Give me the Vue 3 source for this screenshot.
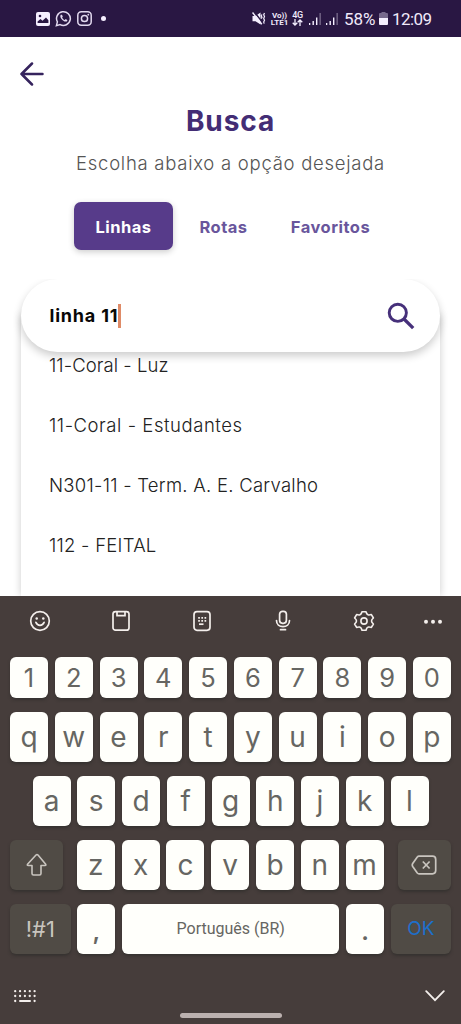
<script setup>
const tabs = [
  { label: 'Linhas', cls: 'linhas' },
  { label: 'Rotas', cls: 'rotas' },
  { label: 'Favoritos', cls: 'favoritos' }
]
const results = [
  { text: '11-Coral - Luz', cls: 'luz' },
  { text: '11-Coral - Estudantes', cls: 'estudantes' },
  { text: 'N301-11 - Term. A. E. Carvalho', cls: 'carvalho' },
  { text: '112 - FEITAL', cls: 'feital' }
]
const digits = [...'1234567890']
const top = [...'qwertyuiop']
const home = [...'asdfghjkl']
const bottom = [...'zxcvbnm']
const dots = [0, 1, 2, 3, 4]
</script>

<template>
  <div class="phone">
    <header class="status">
      <div class="notifications">
        <svg width="14" height="14" viewBox="0 0 14 14"><rect width="14" height="14" rx="2" fill="#f5efff" /><circle cx="4" cy="4" r="1.3" fill="#291743" /><path d="M1.6 11V9.5L4.5 7l2 1.7L10 5.6l2.4 2.6V11z" fill="#291743" /></svg>
        <svg class="wa" width="17" height="17" viewBox="0 0 17 17" fill="none" stroke="#e2d9ef" stroke-width="1.5"><path d="M1.4 15.6l1-3.7a6.9 6.9 0 1 1 2.7 2.7z" /><path d="M5.700 5c-.8 1-.3 2.600.8 4s3 2.800 4.500 2.600 1.500-1.500 1.200-1.700l-1.500-.8-.9 1c-1.100-.3-2.300-1.400-2.700-2.500l.7-.8-.7-1.700c-.5-.4-1-.5-1.400-.1z" fill="#e2d9ef" stroke="none" /></svg>
        <svg width="15" height="15" viewBox="0 0 15 15" fill="none" stroke="#e2d9ef" stroke-width="1.500"><rect x=".8" y=".8" width="13.400" height="13.400" rx="3.500" /><circle cx="7.500" cy="7.500" r="3.100" /><circle cx="11.300" cy="3.700" r=".9" fill="#e2d9ef" stroke="none" /></svg>
        <span class="bullet"></span>
      </div>
      <div class="indicators">
        <svg class="mute" width="14" height="13" viewBox="0 0 14 13"><path d="M.5 4h3L8.500.4v12.200L3.500 9.200h-3z" fill="#f5efff" /><path d="M2-.5l9 11.500" stroke="#291743" stroke-width="1.400" /><path d="M.5.5l9.300 11.700" stroke="#f5efff" stroke-width="1.500" /><path d="M10 2.500l-.8 1.300.8 1.400-.8 1.400M12.500 1l-.8 1.800.8 1.800-.8 1.800.8 1.900-.8 1.800.5 1.500" fill="none" stroke="#f5efff" stroke-width="1.200" /></svg>
        <div class="volte"><span>Vo))</span><span>LTE1</span></div>
        <div class="net"><span>4G</span><svg width="11" height="7" viewBox="0 0 11 7" fill="none" stroke="#f5efff" stroke-width="1.300"><path d="M3 0v5.800M.7 3.700L3 6l2.300-2.300M8 7V1M5.700 3.300L8 1l2.300 2.300" /></svg></div>
        <svg class="sig1" width="12" height="12" viewBox="0 0 12 12" fill="#f5efff"><path d="M0 10h1.300v2H0zM3.500 8h1.400v4H3.500zM7 4.500h1.400V12H7z" /><path d="M10.500 0h1.300v12h-1.300z" opacity=".4" /></svg>
        <svg class="sig2" width="12" height="12" viewBox="0 0 12 12" fill="#f5efff"><path d="M0 10h1.300v2H0zM3.500 8h1.400v4H3.500zM7 4.500h1.400V12H7z" /><path d="M10.500 0h1.300v12h-1.300z" opacity=".4" /></svg>
        <span class="percent">58%</span>
        <svg class="battery" width="9" height="13" viewBox="0 0 9 13"><path d="M2.500 0h4v1H8q1 0 1 1v4H0V2q0-1 1-1h1.500z" fill="#77698d" /><path d="M0 6h9v6q0 1-1 1H1q-1 0-1-1z" fill="#f5efff" /></svg>
        <span class="clock">12:09</span>
      </div>
    </header>

    <main class="page">
      <svg class="back" width="24" height="24" viewBox="0 0 24 24" fill="none" stroke="#35235d" stroke-width="2.500" stroke-linecap="round" stroke-linejoin="round"><path d="M22.500 12H1.500M12 1.500L1.500 12 12 22.500" /></svg>
      <h1><span>Busca</span></h1>
      <p class="subtitle"><span>Escolha abaixo a opção desejada</span></p>
      <nav class="tabs">
        <button v-for="(t, i) in tabs" :key="t.label" :class="[t.cls, { active: i === 0 }]">{{ t.label }}</button>
      </nav>
      <section class="finder">
        <div class="search">
          <span class="query">linha 11</span><span class="caret"></span>
          <svg class="lens" width="28" height="28" viewBox="0 0 28 28" fill="none" stroke="#46307a" stroke-width="2.900"><circle cx="10.800" cy="10.800" r="8.600" /><path d="M17 17l9.200 9.200" stroke-width="3.300" /></svg>
        </div>
        <ul><li v-for="r in results" :key="r.text"><span :class="r.cls">{{ r.text }}</span></li></ul>
      </section>
    </main>

    <section class="keyboard">
      <div class="tools">
        <svg width="22" height="22" viewBox="0 0 22 22" fill="none" stroke="#f4efec" stroke-width="1.700" stroke-linecap="round"><circle cx="11" cy="11" r="9.300" /><path d="M6.900 12.400q1.300 2.900 4.100 2.900t4.100-2.900" /><circle cx="7.700" cy="8.600" r="1.250" fill="#f4efec" stroke="none" /><circle cx="14.300" cy="8.600" r="1.250" fill="#f4efec" stroke="none" /></svg>
        <svg width="22" height="22" viewBox="0 0 22 22" fill="none" stroke="#f4efec" stroke-width="1.700"><rect x="3" y="1.600" width="16" height="18.600" rx="2.500" /><path d="M7 2v3.700h8V2" /></svg>
        <svg width="22" height="22" viewBox="0 0 22 22" fill="none" stroke="#f4efec" stroke-width="1.700"><rect x="3" y="1.700" width="16" height="18.600" rx="3" /><path d="M7.200 7.900h8M7.200 10.900h8" stroke-width="1.700" stroke-dasharray="1.700 1.450" /><path d="M8 14.200h4.500" /></svg>
        <svg width="22" height="22" viewBox="0 0 22 22" fill="none" stroke="#f4efec" stroke-width="1.700" stroke-linecap="round"><rect x="7.600" y="1.300" width="6.800" height="12" rx="3" /><path d="M4.500 10.500c0 4 3 6.200 6.500 6.200s6.500-2.200 6.500-6.200M8.500 19.700h5" /></svg>
        <svg width="22" height="22" viewBox="0 0 22 22" fill="none" stroke="#f4efec" stroke-width="1.600" stroke-linejoin="round"><path d="M9 1.700h4q.6 2.900 2.500 3.300 1 .2 2.900-.4l2 3.400q-1.900 1.600-1.900 3t1.900 3l-2 3.400q-1.900-.6-2.900-.4-1.900.4-2.500 3.300H9Q8.400 17.400 6.500 17q-1-.2-2.900.4l-2-3.400q1.900-1.600 1.900-3T1.600 8l2-3.400q1.900.6 2.900.4Q8.400 4.600 9 1.700z" /><circle cx="11" cy="11" r="3.100" /></svg>
        <svg width="22" height="22" viewBox="0 0 22 22" fill="#f4efec"><circle cx="4" cy="11.800" r="2" /><circle cx="11" cy="11.800" r="2" /><circle cx="18" cy="11.800" r="2" /></svg>
      </div>
      <div class="row numbers"><kbd v-for="k in digits" :key="k">{{ k }}</kbd></div>
      <div class="row"><kbd v-for="k in top" :key="k">{{ k }}</kbd></div>
      <div class="row home"><kbd v-for="k in home" :key="k">{{ k }}</kbd></div>
      <div class="row letters">
        <kbd class="dark shift"><svg width="22" height="24" viewBox="0 0 22 24" fill="none" stroke="#c9c5bf" stroke-width="1.600" stroke-linejoin="round"><path d="M10 2L1.500 11.300q-.7 1.200.7 1.200H6v8q0 1.500 1.500 1.500h6q1.500 0 1.500-1.500v-8h4q1.400 0 .7-1.200L12 2q-1-.9-2 0z" /></svg></kbd>
        <kbd v-for="k in bottom" :key="k">{{ k }}</kbd>
        <kbd class="dark erase"><svg width="26" height="20" viewBox="0 0 26 20" fill="none" stroke="#c9c5bf" stroke-width="1.700" stroke-linejoin="round"><path d="M8 1.200h13.500q3.200 0 3.200 3.200v11.200q0 3.200-3.200 3.200H8q-1 0-1.700-.8L1.700 11.500q-.9-1.500 0-3L6.300 2Q7 1.200 8 1.200zM11.800 6.500l6.800 7M18.600 6.500l-6.800 7" /></svg></kbd>
      </div>
      <div class="row last">
        <kbd class="dark symbols">!#1</kbd><kbd class="punct">,</kbd><kbd class="space">Português (BR)</kbd><kbd class="punct">.</kbd><kbd class="dark ok">OK</kbd>
      </div>
      <footer>
        <svg width="22" height="13" viewBox="0 0 22 13" fill="#f4efec"><template v-for="d in dots" :key="d"><circle :cx="1.200 + d * 4.850" cy="1.200" r="1.150" /><circle :cx="1.200 + d * 4.850" cy="6" r="1.150" /></template><circle cx="1.200" cy="11" r="1.150" /><circle cx="20.600" cy="11" r="1.150" /><rect x="5" y="9.900" width="12" height="2.200" rx="1" /></svg>
        <span class="handle"></span>
        <svg width="20" height="12" viewBox="0 0 20 12" fill="none" stroke="#f4efec" stroke-width="1.800" stroke-linecap="round"><path d="M1.200 1.200L10 10.200l8.800-9" /></svg>
      </footer>
    </section>
  </div>
</template>

<style>
body { margin: 0; }
</style>

<style scoped>
* { box-sizing: border-box; }
svg { display: block; flex: none; }
.phone { width: 461px; height: 1024px; overflow: hidden; background: #fff; display: flex; flex-direction: column; font-family: Inter, "Liberation Sans", sans-serif; }
.status { height: 37px; flex: none; background: #291743; display: flex; justify-content: space-between; padding: 0 30px 0 36px; color: #f0e9fa; font-family: Roboto, sans-serif; }
.notifications, .indicators { display: flex; align-items: center; }
.wa { margin: 0 5px 0 5px; }
.bullet { width: 5px; height: 5px; border-radius: 50%; background: #f5efff; margin-left: 9px; }
.volte, .net { display: flex; flex-direction: column; align-items: center; font-size: 8px; line-height: 7px; font-weight: 700; white-space: nowrap; }
.volte { width: 17px; margin-left: 5px; }
.net { width: 11px; margin-left: 4px; font-size: 9px; letter-spacing: -.3px; font-weight: 500; }
.sig1 { margin-left: 6px; }
.sig2 { margin-left: 5px; }
.percent { width: 32px; margin-left: 6px; font-size: 17px; letter-spacing: -.1px; }
.battery { margin-left: 3px; }
.clock { width: 39px; margin-left: 4px; font-size: 17px; letter-spacing: -.6px; white-space: nowrap; }
.page { height: 559px; flex: none; overflow: hidden; }
.back { margin: 25px 0 0 20px; }
h1 { margin: 18px 0 0; height: 34px; line-height: 34px; text-align: center; font-size: 28px; font-weight: 700; color: #432d75; letter-spacing: .9px; }
.subtitle { margin: 12px 0 0; height: 26px; line-height: 26px; text-align: center; color: #555; font-size: 18.500px; font-weight: 350; letter-spacing: .73px; white-space: nowrap; }
.tabs { display: flex; padding-left: 74px; margin-top: 26px; }
.tabs button { border: 0; padding: 2px 0 0; height: 48px; background: none; font: 700 16.500px/46px Inter, sans-serif; letter-spacing: .5px; color: #69569c; border-radius: 7px; text-align: center; white-space: nowrap; }
.tabs .linhas { width: 99px; }
.tabs .rotas { width: 101px; }
.tabs .favoritos { width: 113px; }
.tabs .active { background: #573b8a; color: #fff; box-shadow: 0 2px 6px #0003; }
.finder { margin-top: 12px; height: 334px; overflow: hidden; padding: 17px 21px 0; display: flex; flex-direction: column; clip-path: inset(17px 0 0); }
.search { height: 73px; flex: none; border-radius: 37px; background: #fff; box-shadow: 0 4px 8px #0003; display: flex; align-items: center; padding: 0 25px 0 28.500px; position: relative; z-index: 1; }
.query { font-size: 18px; font-weight: 700; letter-spacing: .8px; color: #080808; white-space: nowrap; }
.caret { width: 3px; height: 24px; background: #df8b67; }
.lens { margin-left: auto; }
ul { list-style: none; margin: -37px 0 0; padding: 20px 28px 0; height: 281px; flex: none; background: #fff; box-shadow: 0 0 8px #0003; }
li { height: 60px; line-height: 60px; margin: 0; font-size: 18.500px; font-weight: 350; color: #222; white-space: nowrap; }
.luz { letter-spacing: .07px; }
.estudantes { letter-spacing: .55px; }
.carvalho { letter-spacing: .26px; }
.feital { letter-spacing: .25px; }
.keyboard { height: 428px; background: #463d3b; flex: none; color: #666662; }
.tools { height: 61px; display: flex; justify-content: space-between; padding: 14px 17px 0 29px; }
.tools svg:last-child { margin-left: -12px; }
.row { display: grid; grid-template-columns: repeat(10, 38px); justify-content: space-between; padding: 0 10px; height: 50px; margin-bottom: 14px; }
.row.numbers { height: 41px; }
.row.home { grid-template-columns: repeat(9, 38px); padding: 0 32.500px; }
.row.letters { grid-template-columns: 60px repeat(7, 38px) 60px; justify-content: start; column-gap: 6.800px; }
.letters .shift { width: 53px; }
.letters .erase { width: 53px; margin-left: 7.500px; }
.row.last { grid-template-columns: 60.500px 38px 217px 38px 60px; }
kbd { display: flex; align-items: center; justify-content: center; background: #fffffb; border-radius: 6px; box-shadow: 0 2px 3px #32302dcc; font-family: Inter, sans-serif; font-size: 28px; line-height: 32px; font-weight: 400; padding-bottom: 0; }
.numbers kbd { font-size: 25.500px; padding-top: 1px; }
kbd.dark { background: #504b45; color: #c9c5bf; }
.last .symbols { font-size: 22px; }
.last .punct { font-size: 24px; padding-top: 6px; font-weight: 600; }
.last .space { font: 400 16px/20px Roboto, sans-serif; }
.last .ok { font-size: 19px; color: #1d6fca; font-weight: 400; }
footer { display: grid; grid-template-columns: 22px 102px 20px; justify-content: space-between; padding: 22px 16px 0 14px; height: 56px; }
.handle { margin: 23px 0 0; height: 5px; border-radius: 3px; background: #bbb1af; }
</style>
